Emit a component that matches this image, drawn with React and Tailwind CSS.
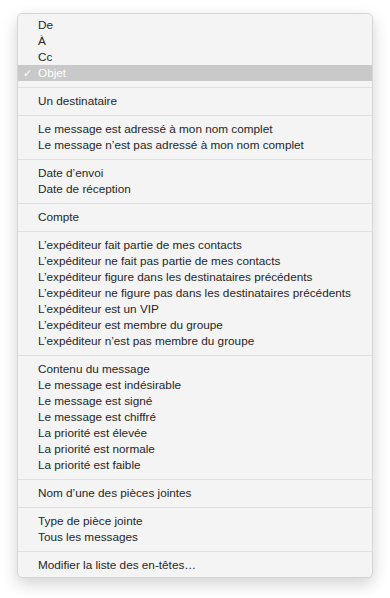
import React from "react";

const groups = [
  ["De", "À", "Cc", "Objet"],
  ["Un destinataire"],
  ["Le message est adressé à mon nom complet", "Le message n’est pas adressé à mon nom complet"],
  ["Date d’envoi", "Date de réception"],
  ["Compte"],
  [
    "L’expéditeur fait partie de mes contacts",
    "L’expéditeur ne fait pas partie de mes contacts",
    "L’expéditeur figure dans les destinataires précédents",
    "L’expéditeur ne figure pas dans les destinataires précédents",
    "L’expéditeur est un VIP",
    "L’expéditeur est membre du groupe",
    "L’expéditeur n’est pas membre du groupe",
  ],
  [
    "Contenu du message",
    "Le message est indésirable",
    "Le message est signé",
    "Le message est chiffré",
    "La priorité est élevée",
    "La priorité est normale",
    "La priorité est faible",
  ],
  ["Nom d’une des pièces jointes"],
  ["Type de pièce jointe", "Tous les messages"],
  ["Modifier la liste des en-têtes…"],
];

export default function App() {
  return (
    <div className="w-[390px] h-[598px] bg-white pt-[13px] pl-[17px]">
      <div
        className="w-[356px] bg-[#f4f4f4] rounded-[5px] border border-[#d6d6d6] pt-[3px] pb-[4px] shadow-[0_6px_16px_rgba(0,0,0,0.18)] text-[#262626] text-[11.75px] leading-[16px]"
        style={{ fontFamily: '"Liberation Sans", Arial, sans-serif' }}
      >
        {groups.map((g, gi) => (
          <React.Fragment key={gi}>
            {gi > 0 && (
              <div className="h-[12px] flex items-center">
                <div className="h-px w-full bg-[#e0e0e0]" />
              </div>
            )}
            {g.map((item) => {
              const sel = item === "Objet";
              return (
                <div
                  key={item}
                  className={
                    "h-[16px] flex items-center pl-[20px] relative " +
                    (sel ? "bg-[#c9c9c9] text-white" : "")
                  }
                >
                  {sel && (
                    <span className="absolute left-[5px] text-[11px]">✓</span>
                  )}
                  {item}
                </div>
              );
            })}
          </React.Fragment>
        ))}
      </div>
    </div>
  );
}
